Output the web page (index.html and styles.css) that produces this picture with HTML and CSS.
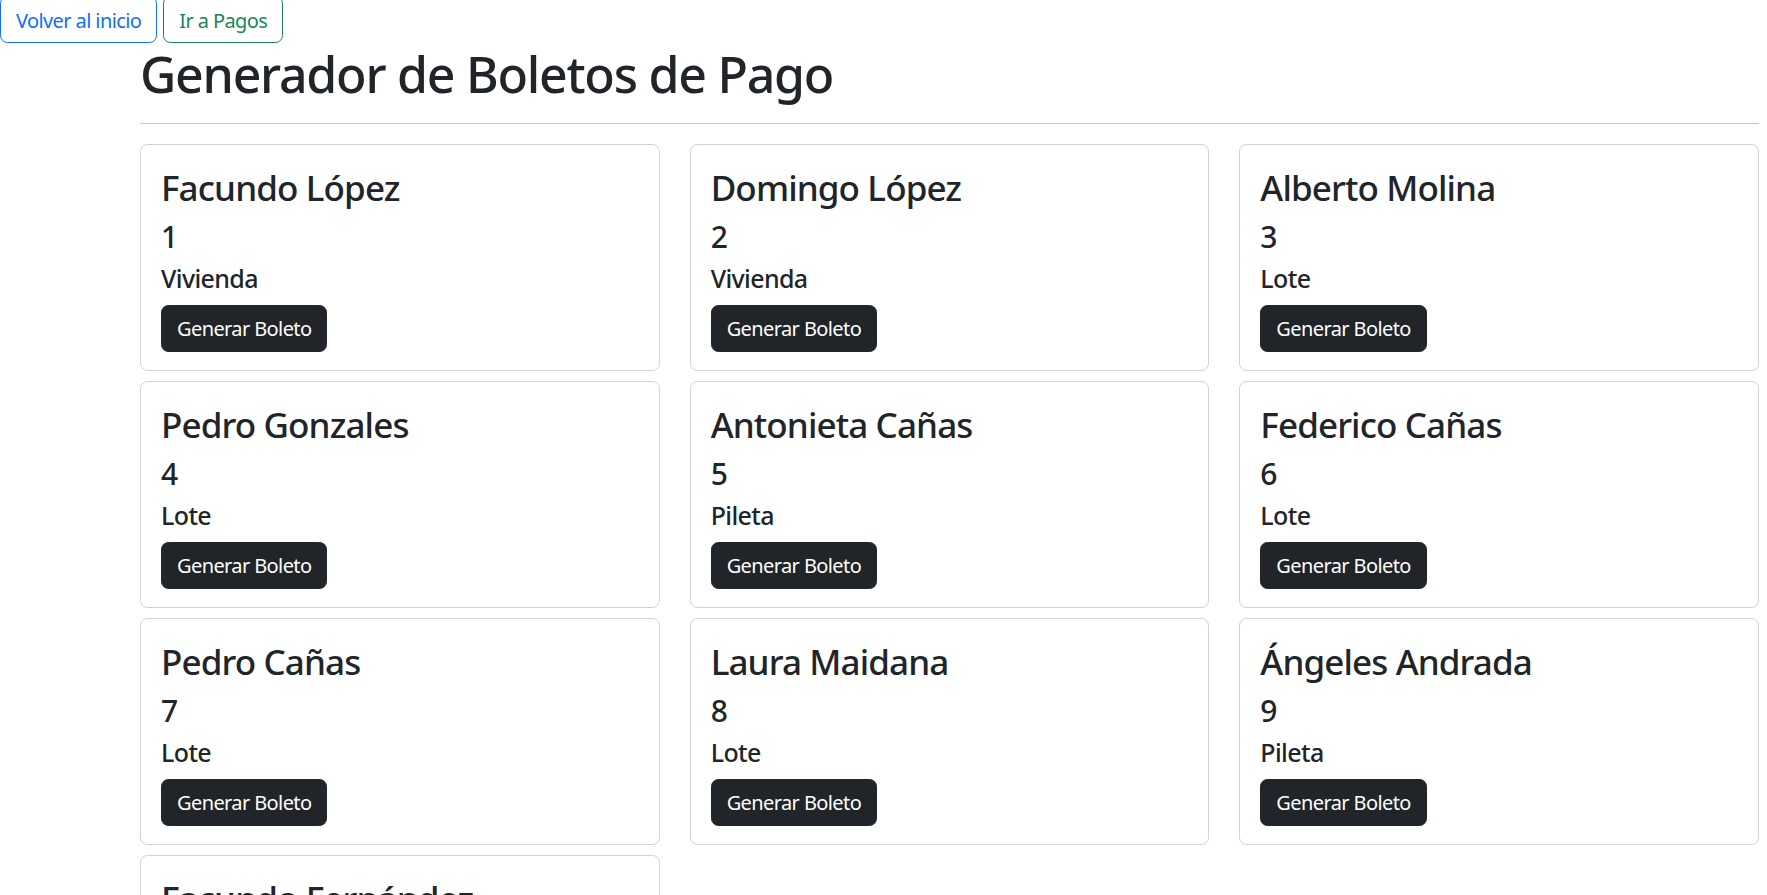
FILE: index.html
```html
<!DOCTYPE html>
<html lang="es">
<head>
<meta charset="utf-8">
<title>Generador de Boletos de Pago</title>
<link rel="stylesheet" href="styles.css">
</head>
<body>
<nav class="topbar">
  <a class="btn btn-outline-primary" href="#">Volver al inicio</a>
  <a class="btn btn-outline-success" href="#">Ir a Pagos</a>
</nav>
<main class="page">
  <h1 class="title">Generador de Boletos de Pago</h1>
  <hr class="divider">
  <div class="cards">
    <div class="card"><h3 class="card-name">Facundo López</h3><h4 class="card-num">1</h4><h5 class="card-type">Vivienda</h5><button class="btn btn-dark">Generar Boleto</button></div>
    <div class="card"><h3 class="card-name">Domingo López</h3><h4 class="card-num">2</h4><h5 class="card-type">Vivienda</h5><button class="btn btn-dark">Generar Boleto</button></div>
    <div class="card"><h3 class="card-name">Alberto Molina</h3><h4 class="card-num">3</h4><h5 class="card-type">Lote</h5><button class="btn btn-dark">Generar Boleto</button></div>
    <div class="card"><h3 class="card-name">Pedro Gonzales</h3><h4 class="card-num">4</h4><h5 class="card-type">Lote</h5><button class="btn btn-dark">Generar Boleto</button></div>
    <div class="card"><h3 class="card-name">Antonieta Cañas</h3><h4 class="card-num">5</h4><h5 class="card-type">Pileta</h5><button class="btn btn-dark">Generar Boleto</button></div>
    <div class="card"><h3 class="card-name">Federico Cañas</h3><h4 class="card-num">6</h4><h5 class="card-type">Lote</h5><button class="btn btn-dark">Generar Boleto</button></div>
    <div class="card"><h3 class="card-name">Pedro Cañas</h3><h4 class="card-num">7</h4><h5 class="card-type">Lote</h5><button class="btn btn-dark">Generar Boleto</button></div>
    <div class="card"><h3 class="card-name">Laura Maidana</h3><h4 class="card-num">8</h4><h5 class="card-type">Lote</h5><button class="btn btn-dark">Generar Boleto</button></div>
    <div class="card"><h3 class="card-name">Ángeles Andrada</h3><h4 class="card-num">9</h4><h5 class="card-type">Pileta</h5><button class="btn btn-dark">Generar Boleto</button></div>
    <div class="card"><h3 class="card-name">Facundo Fernández</h3><h4 class="card-num">10</h4><h5 class="card-type">Lote</h5><button class="btn btn-dark">Generar Boleto</button></div>
  </div>
</main>
</body>
</html>
```

FILE: styles.css
```css
html {
  font-size: 20px;
}

body {
  margin: 0;
  font-family: "Noto Sans", "Open Sans", sans-serif;
  font-size: 1rem;
  line-height: 1.5;
  color: #212529;
  background: #fff;
}

.topbar {
  display: flex;
  gap: 6px;
  margin-top: -4.3px;
}

.topbar .btn {
  padding-top: 9px;
  padding-bottom: 6px;
}

.btn {
  display: inline-block;
  padding: 8.5px 0.75rem 6.5px;
  font-family: inherit;
  font-size: 1rem;
  font-weight: 400;
  line-height: 1.5;
  letter-spacing: -0.03em;
  border: 1px solid transparent;
  border-radius: 0.375rem;
  text-decoration: none;
  background: transparent;
  cursor: pointer;
}

.btn-outline-primary {
  color: #0d6efd;
  border-color: #0d6efd;
}

.btn-outline-success {
  color: #198754;
  border-color: #198754;
}

.btn-dark {
  color: #fff;
  background: #212529;
  border-color: #212529;
}

.page {
  padding: 0 8px 0 140px;
}

.title {
  margin: 0 0 8px;
  padding-top: 1.5px;
  font-size: 2.5rem;
  font-weight: 500;
  line-height: 1.2;
  letter-spacing: -0.025em;
}

.divider {
  margin: 18.5px 0 1rem;
  border: 0;
  border-top: 1px solid;
  color: inherit;
  opacity: 0.25;
}

.cards {
  display: grid;
  grid-template-columns: repeat(3, 1fr);
  column-gap: 30px;
  row-gap: 0.5rem;
}

.card {
  border: 1px solid rgba(0, 0, 0, 0.175);
  border-radius: 0.375rem;
  padding: 22px 1rem 18px;
}

.card-name,
.card-num,
.card-type {
  margin: 0 0 0.5rem;
  font-weight: 500;
  line-height: 1.2;
  letter-spacing: -0.025em;
}

.card-name {
  font-size: 1.75rem;
}

.card-num {
  font-size: 1.5rem;
  margin-bottom: 8px;
}

.card-type {
  font-size: 1.25rem;
  margin-bottom: 12px;
}
```
